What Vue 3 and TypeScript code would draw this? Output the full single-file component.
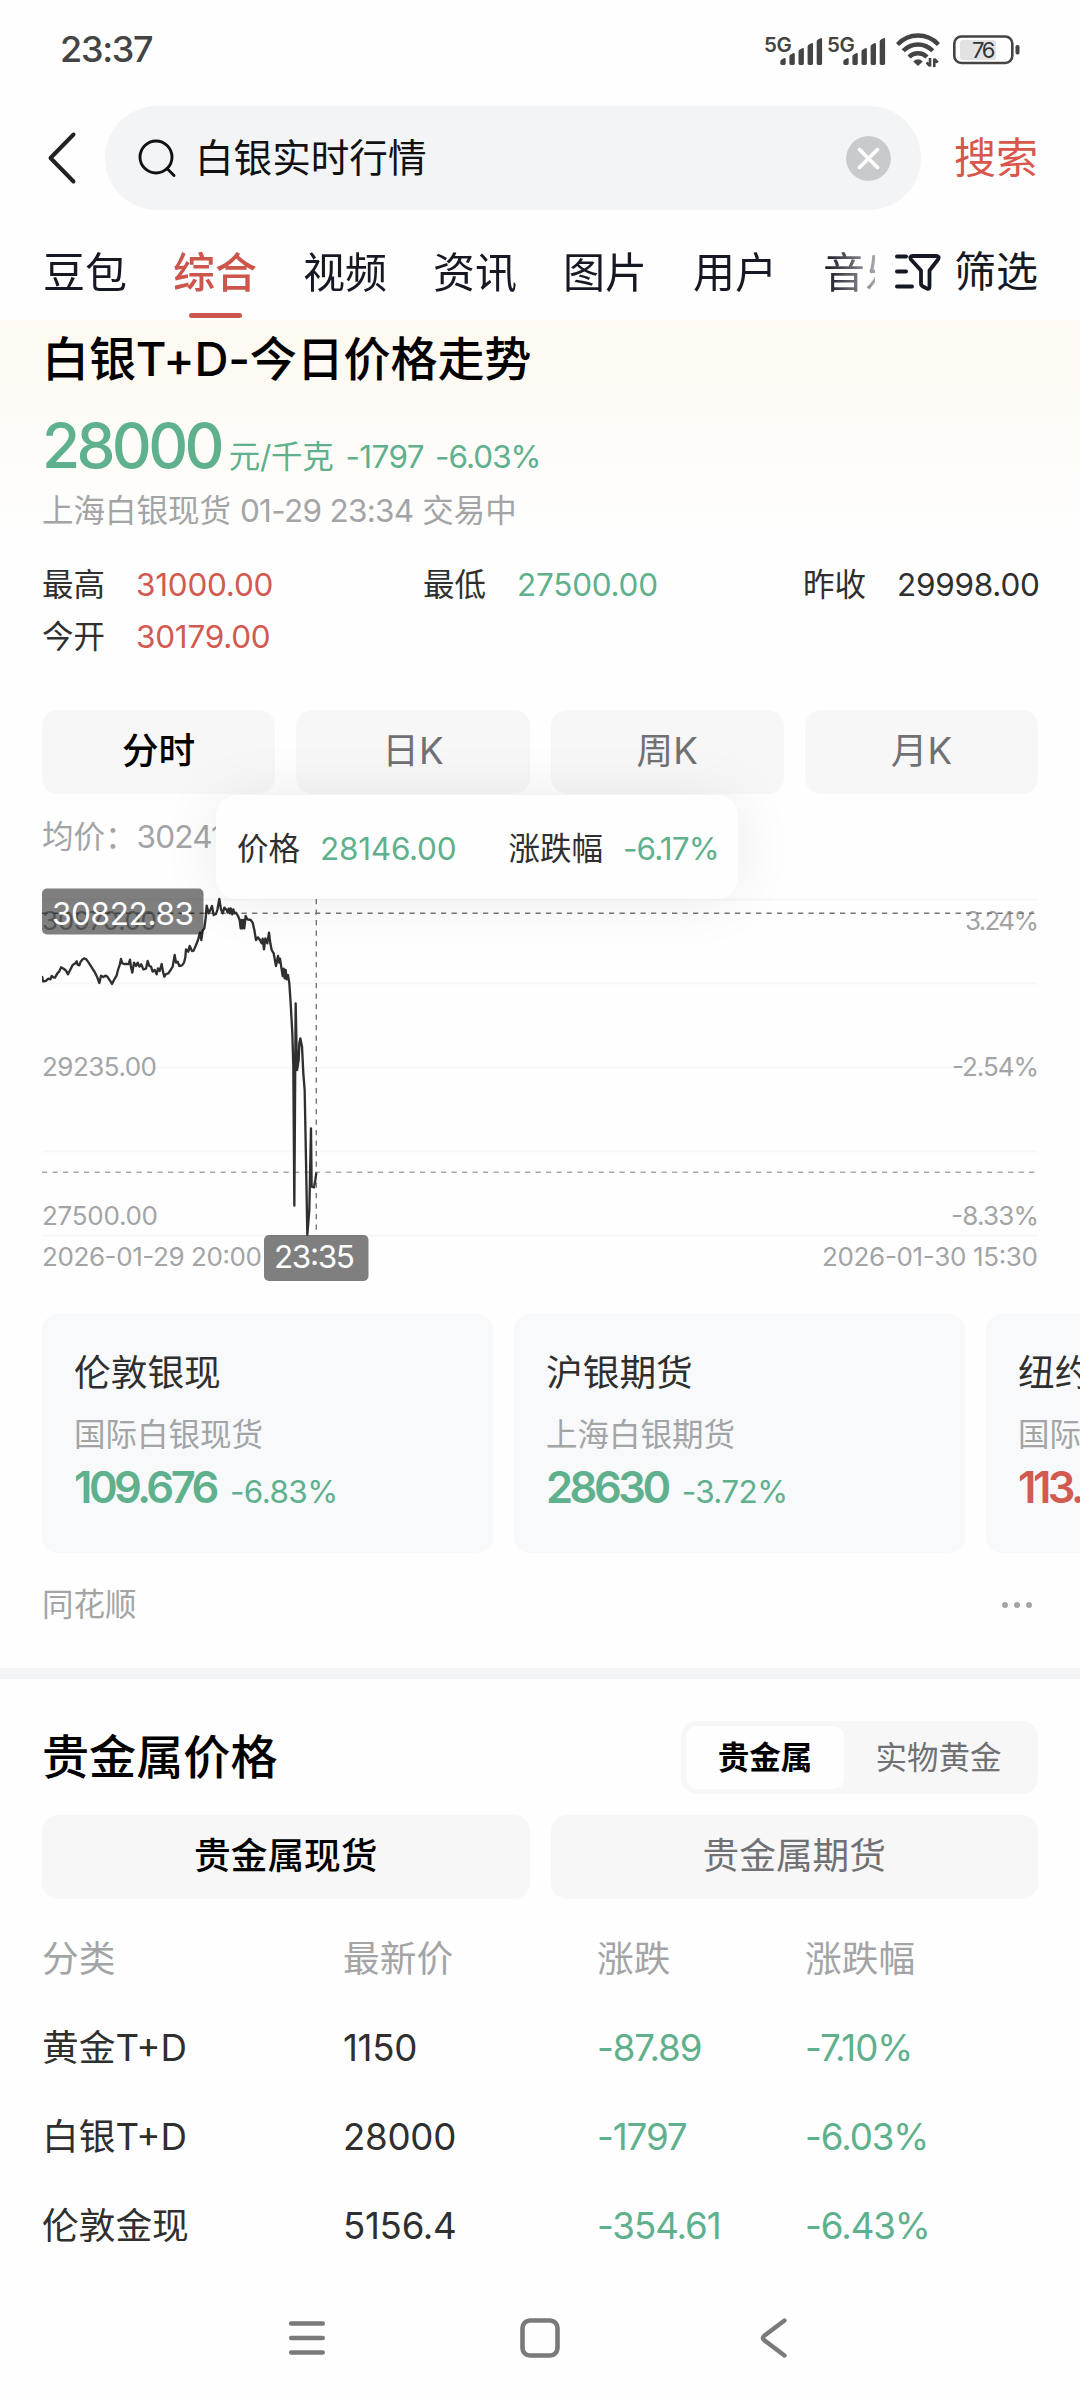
<script setup lang="ts">
interface Stat { label: string; value: string; tone: string }
interface Quote { name: string; market: string; price: string; change: string; tone: string }

const tabs = ['豆包', '综合', '视频', '资讯', '图片', '用户', '音乐']
const periods = ['分时', '日K', '周K', '月K']
const stats: Stat[] = [
  { label: '最高', value: '31000.00', tone: 'up' },
  { label: '最低', value: '27500.00', tone: 'down' },
  { label: '昨收', value: '29998.00', tone: '' },
  { label: '今开', value: '30179.00', tone: 'up' },
]
const quotes: Quote[] = [
  { name: '伦敦银现', market: '国际白银现货', price: '109.676', change: '-6.83%', tone: 'down' },
  { name: '沪银期货', market: '上海白银期货', price: '28630', change: '-3.72%', tone: 'down' },
  { name: '纽约银主', market: '国际白银期货', price: '113.290', change: '+1.02%', tone: 'up' },
]
const rows = [
  ['黄金T+D', '1150', '-87.89', '-7.10%'],
  ['白银T+D', '28000', '-1797', '-6.03%'],
  ['伦敦金现', '5156.4', '-354.61', '-6.43%'],
]
const gridLines = [899, 983, 1067, 1151, 1235]
// Price series, in thirds of a pixel from the left edge and from y = 860.
const series =
  '126,348 129,364 137,363 145,356 151,358 155,348 160,352 165,353 172,340 178,334 183,322 192,327 198,332 204,343 212,327 218,315 226,310 230,304 233,314 238,316 242,305 248,298 252,295 258,297 266,308 275,322 284,336 291,350 298,369 303,347 310,351 316,347 322,350 330,362 336,372 342,360 350,346 354,330 359,315 363,297 367,310 373,312 386,312 390,299 393,322 397,338 402,308 408,318 413,308 418,320 424,313 430,328 438,326 443,303 448,318 453,320 458,335 464,330 470,343 474,325 479,333 485,312 489,335 493,350 498,342 505,340 512,330 518,320 524,285 528,308 533,305 538,318 546,316 552,308 556,292 558,268 565,275 569,258 576,273 581,272 588,255 594,240 600,218 604,240 608,212 613,205 617,175 620,137 626,160 631,150 636,138 641,165 648,162 652,150 658,117 663,148 668,160 673,143 680,150 683,158 686,146 690,160 692,145 697,163 700,148 703,160 708,158 714,168 719,180 722,205 725,180 727,205 731,180 733,205 737,168 742,178 752,180 758,188 763,210 768,240 774,232 780,240 785,250 788,236 792,268 796,235 802,250 807,218 811,250 815,270 821,280 828,318 834,288 838,308 840,296 845,328 848,348 851,326 854,355 857,330 860,358 864,345 868,370 872,430 877,520 880,620 883,1037 887,430 891,630 896,600 898,550 901,535 906,560 910,640 914,690 918,900 922,1124 928,1050 933,805 935,980 942,982 946,960 949,938'
const barHeights = [7, 12, 17, 22, 27]
</script>

<template>
  <div class="screen">
    <header class="status">
      <span class="clock">23:37</span>
      <div class="indicators">
        <div v-for="n in 2" :key="n" class="signal">
          <span class="net">5G</span>
          <svg width="43" height="28" viewBox="0 0 43 28">
            <path v-for="(h, i) in barHeights" :key="i" fill="#444"
              :d="`M${i * 9.1 + 0.3} ${28 - h + 3.4}q0-1.2 1-1.7l2.6-1.5q1.8-.8 1.8 1.2V26.600q0 1.400-1.400 1.400h-2.600q-1.400 0-1.400-1.400z`" />
          </svg>
        </div>
        <svg class="wifi" width="44" height="34" viewBox="0 0 44 34" fill="none" stroke="#444" stroke-width="4.400">
          <path d="M1.500 11.500C13-.5 31-.5 42.500 11.500" />
          <path d="M7.200 17.800c8.500-8.500 21-8.500 29.600 0" />
          <path d="M13 24c5-5 13-5 18 0" />
          <path d="M17.200 28.500q4.800-4.500 9.600 0L22 33z" fill="#444" stroke="none" />
          <path d="M34 25v8.500M34 33l-3.500-3.500M38.300 34v-8.500M38.300 26l3.500 3.500" stroke-width="2.600" />
        </svg>
        <svg width="67" height="30" viewBox="0 0 67 30">
          <rect x="7" y="5" width="36" height="20" rx="3" fill="#e2e2e2" />
          <rect x="1.300" y="1.500" width="58" height="26.500" rx="7" fill="none" stroke="#444" stroke-width="2.600" />
          <rect x="62.500" y="10" width="4" height="9.500" rx="1.800" fill="#444" />
          <text x="19" y="23" font-size="22" textLength="23.500" fill="#333">76</text>
        </svg>
      </div>
    </header>

    <div class="searchbar">
      <svg class="back" width="30" height="54" viewBox="0 0 30 54" fill="none" stroke="#222" stroke-width="4" stroke-linecap="round" stroke-linejoin="round">
        <path d="M26.500 3.500L3.500 27L26.500 50.500" />
      </svg>
      <div class="field">
        <svg width="40" height="40" viewBox="0 0 40 40" fill="none" stroke="#111" stroke-width="2.900" stroke-linecap="round">
          <circle cx="18" cy="19" r="16" /><path d="M29 30.500l7 7" />
        </svg>
        <span class="query">白银实时行情</span>
        <svg width="45" height="45" viewBox="0 0 45 45">
          <circle cx="22.500" cy="22.500" r="22.400" fill="#c9cacc" />
          <path d="M13.500 13.500l18 18m0-18l-18 18" stroke="#fff" stroke-width="3.800" stroke-linecap="round" />
        </svg>
      </div>
      <span class="go">搜索</span>
    </div>

    <nav class="tabs">
      <div class="tablist">
        <span v-for="(t, i) in tabs" :key="t" class="tab" :class="{ active: i === 1 }">{{ t }}</span>
      </div>
      <svg width="46" height="40" viewBox="0 0 46 40" fill="none" stroke="#161823" stroke-width="4" stroke-linecap="round" stroke-linejoin="round">
        <path d="M2 4.500h9M2 19.500h9M2 34.500h15" />
        <path d="M18 4h23q4 0 2 3.500L34.500 18.500V34.500q0 3-2.500 2.200L28 34.500q-2-1-2-3V18.500L16 7.500q-2-3.500 2-3.500z" stroke-width="3.800" />
      </svg>
      <span class="filter">筛选</span>
    </nav>

    <section class="silver">
      <h1>白银T+D-今日价格走势</h1>
      <div class="headline down">
        <span class="big">28000</span>
        <span class="unit">元/千克</span>
        <span class="diff">-1797</span>
        <span class="pct">-6.03%</span>
      </div>
      <p class="meta">上海白银现货 <span>01-29 23:34</span> 交易中</p>
      <div class="stats">
        <div v-for="s in stats" :key="s.label" class="stat">
          <span>{{ s.label }}</span><span class="num" :class="s.tone">{{ s.value }}</span>
        </div>
      </div>
      <div class="buttons">
        <div v-for="(p, i) in periods" :key="p" class="button" :class="{ on: i === 0 }">{{ p }}</div>
      </div>
      <div class="chart">
        <p class="average">均价：<span>30241.00</span></p>
        <svg width="998" height="410" viewBox="42 878 998 410">
          <path v-for="y in gridLines" :key="y" :d="`M42 ${y}.500H1038`" stroke="#f7f7f8" stroke-width="2" />
          <g fill="#a3a4a6" font-size="26">
            <text x="42" y="930" textLength="115">30970.00</text>
            <text x="42" y="1076" textLength="115">29235.00</text>
            <text x="42" y="1225" textLength="116">27500.00</text>
            <text x="965" y="930" textLength="74">3.24%</text>
            <text x="952" y="1076" textLength="87">-2.54%</text>
            <text x="951" y="1225" textLength="88">-8.33%</text>
            <text x="42" y="1266" textLength="220">2026-01-29 20:00</text>
            <text x="822" y="1266" textLength="216">2026-01-30 15:30</text>
          </g>
          <path d="M42 1172.300H1038" stroke="#a8a8a8" stroke-width="1.400" stroke-dasharray="5.250 5.250" />
          <path d="M42 913.300H1038M316.300 899V1235" fill="none" stroke="#777" stroke-width="1.400" stroke-dasharray="5.250 5.250" />
          <polyline :points="series" transform="translate(0 860) scale(.33333)" fill="none" stroke="#2f2f2f" stroke-width="7" stroke-linejoin="round" />
          <g fill="#000" fill-opacity=".5">
            <rect x="42" y="888.500" width="161.500" height="46" rx="5" />
            <rect x="264" y="1235" width="104.500" height="46" rx="5" />
          </g>
          <g fill="#fff" font-size="31.500">
            <text x="52" y="925" textLength="142">30822.83</text>
            <text x="274" y="1268" textLength="81">23:35</text>
          </g>
        </svg>
        <div class="tooltip">
          <span>价格</span><span class="num down">28146.00</span>
          <span class="second">涨跌幅</span><span class="num rate down">-6.17%</span>
        </div>
      </div>
      <div class="cards">
        <article v-for="q in quotes" :key="q.name" class="card">
          <h2>{{ q.name }}</h2>
          <p>{{ q.market }}</p>
          <div class="quote" :class="q.tone"><b>{{ q.price }}</b><span>{{ q.change }}</span></div>
        </article>
      </div>
      <footer class="source">
        <span>同花顺</span>
        <svg width="34" height="8" viewBox="0 0 34 8" fill="#a3a4a6"><circle cx="5" cy="4" r="3" /><circle cx="17" cy="4" r="3" /><circle cx="29" cy="4" r="3" /></svg>
      </footer>
    </section>

    <section class="metals">
      <div class="metalhead">
        <h1>贵金属价格</h1>
        <div class="segment"><span class="on">贵金属</span><span>实物黄金</span></div>
      </div>
      <div class="buttons">
        <div class="button on">贵金属现货</div>
        <div class="button">贵金属期货</div>
      </div>
      <div class="table">
        <div class="row head"><span>分类</span><span>最新价</span><span>涨跌</span><span>涨跌幅</span></div>
        <div v-for="r in rows" :key="r[0]" class="row">
          <span v-for="(c, i) in r" :key="i" :class="{ latest: i === 1, move: i > 1, down: i > 1 }">{{ c }}</span>
        </div>
      </div>
    </section>

    <nav class="system">
      <svg width="40" height="42" viewBox="0 0 40 42" stroke="#7a7a7a" stroke-width="4.600" stroke-linecap="round"><path d="M4.200 6.500h31.500M4.200 21h31.500M4.200 35.500h31.500" /></svg>
      <svg width="40" height="42" viewBox="0 0 40 42" fill="none" stroke="#7a7a7a" stroke-width="4.600"><rect x="2.500" y="3.500" width="35" height="35" rx="7.500" /></svg>
      <svg width="40" height="42" viewBox="0 0 40 42" fill="none" stroke="#7a7a7a" stroke-width="4.400" stroke-linecap="round"><path d="M31.500 3.500L11 19Q9 21 11 23L31.500 38.500" /></svg>
    </nav>
  </div>
</template>

<style>
body { background: #fefefe; }
</style>

<style scoped>
.screen {
  width: 1080px; height: 2400px; overflow: hidden; background: #fefefe; color: #2f2f2f; line-height: 1.2;
  font-family: Inter, "Noto Sans CJK SC", sans-serif; display: flex; flex-direction: column;
}
h1, h2, p { margin: 0; font-weight: 400; }
svg { display: block; flex: none; }
.up { color: #d25a50; }
.down { color: #5fb08c; }
.num { letter-spacing: -0.25px; }

.status { height: 100px; display: flex; align-items: center; justify-content: space-between; padding: 0 60px 0 60px; }
.clock { font-size: 36px; font-weight: 500; color: #444; letter-spacing: -1.3px; }
.indicators { display: flex; align-items: center; }
.signal { display: flex; align-items: flex-end; width: 63px; height: 30px; }
.net { font-size: 20.500px; font-weight: 600; line-height: 20px; width: 16px; margin-left: -1px; letter-spacing: -0.5px; color: #444; align-self: flex-start; }
.wifi { margin: 0 13px 0 5px; }

.searchbar { margin-top: 6px; height: 104px; display: flex; align-items: center; }
.back { margin: 0 28px 0 47px; }
.field { width: 816px; height: 104px; border-radius: 52px; background: #f3f4f6; display: flex; align-items: center; padding: 0 30px 0 33px; box-sizing: border-box; }
.query { flex: 1; margin-left: 17px; font-size: 38.600px; color: #111; }
.go { margin-left: 33px; font-size: 42px; color: #d9564a; white-space: nowrap; }

.tabs { height: 110px; padding: 14px 42px 0 0; box-sizing: border-box; display: flex; align-items: center; font-size: 42px; color: #161823; }
.tablist { width: 876px; height: 96px; margin-right: 20px; padding-left: 43px; box-sizing: border-box; overflow: hidden; display: flex; gap: 46px; -webkit-mask-image: linear-gradient(90deg, #000 825px, transparent 905px); mask-image: linear-gradient(90deg, #000 825px, transparent 905px); }
.tab { position: relative; width: 84px; flex: none; line-height: 98px; white-space: nowrap; }
.tab.active { color: #cc554c; font-weight: 500; }
.tab.active::after { content: ""; position: absolute; left: 16px; top: 89px; width: 53px; height: 5px; border-radius: 3px; background: #cc554c; }
.filter { margin-left: 13px; white-space: nowrap; }

.silver { height: 1348px; padding: 0 42px; background: linear-gradient(#fdf9f0, #fefefe 220px); box-sizing: border-box; }
h1 { font-size: 47.100px; font-weight: 500; color: #000; white-space: nowrap; }
.silver h1 { line-height: 78px; height: 77px; letter-spacing: -0.2px; }
.headline { display: flex; align-items: baseline; margin-top: 17px; height: 63px; line-height: 63px; font-size: 31.500px; white-space: nowrap; }
.big { font-size: 62px; font-weight: 500; letter-spacing: -3.700px; }
.unit { margin-left: 8px; letter-spacing: -0.3px; }
.diff { margin-left: 12px; letter-spacing: -0.6px; }
.pct { margin-left: 11px; letter-spacing: -1px; }
.meta { margin-top: 13px; line-height: 41px; height: 40px; font-size: 31.500px; color: #a3a4a6; }
.meta span { letter-spacing: -0.7px; }
.stats { margin-top: 29px; display: grid; grid-template-columns: 381px 380px auto; line-height: 52px; font-size: 31.500px; }
.stat { display: flex; gap: 31px; white-space: nowrap; }
.silver .buttons { margin-top: 47px; }
.buttons { display: flex; gap: 21px; }
.button { flex: 1; height: 84px; line-height: 82px; border-radius: 16px; background: #f7f7f7; text-align: center; font-size: 36.700px; color: #707174; }
.button.on { color: #000; font-weight: 500; }

.chart { position: relative; height: 520px; }
.average { line-height: 85px; height: 84px; font-size: 31.500px; color: #a3a4a6; }
.average span { letter-spacing: -0.8px; }
.tooltip { position: absolute; left: 174px; top: 1px; width: 522px; height: 104px; line-height: 107px; box-sizing: border-box; padding-left: 21px; border-radius: 21px; background: #fefefe; box-shadow: 0 0 60px rgba(0, 0, 0, .075); display: flex; font-size: 31.500px; white-space: nowrap; }
.tooltip .num { margin-left: 20px; }
.tooltip .rate { letter-spacing: -0.8px; }
.tooltip .second { margin-left: 52px; }

.cards { display: flex; gap: 21px; margin-right: -42px; overflow: hidden; }
.card { flex: none; width: 451px; height: 239px; border-radius: 16px; background: #f8f9fb; box-sizing: border-box; padding: 32px 0 0 32px; white-space: nowrap; }
h2 { font-size: 36.700px; line-height: 53px; height: 52px; }
.card p { margin-top: 16px; line-height: 41px; height: 40px; font-size: 31.500px; color: #a3a4a6; }
.quote { display: flex; align-items: baseline; line-height: 60px; font-size: 31.500px; margin-top: 3px; }
.quote b { font-size: 43.500px; font-weight: 600; letter-spacing: -3.500px; }
.quote span { margin-left: 14px; letter-spacing: -0.6px; }
.source { height: 104px; display: flex; align-items: center; justify-content: space-between; font-size: 31.500px; color: #a3a4a6; padding-right: 4px; }

.metals { border-top: 11px solid #f3f4f6; padding: 42px 42px 0; }
.metalhead { display: flex; align-items: center; justify-content: space-between; height: 73px; margin-bottom: 21px; }
.segment { width: 357px; height: 73px; box-sizing: border-box; padding: 5px; border-radius: 16px; background: #f7f7f7; display: flex; line-height: 63px; font-size: 31.500px; color: #707174; text-align: center; }
.segment span { flex: 1; }
.segment .on { flex: none; width: 158px; background: #fefefe; border-radius: 11px; color: #000; font-weight: 600; }
.table { margin-top: 15px; font-size: 36.700px; }
.row { display: grid; grid-template-columns: 301px 254px 208px auto; height: 89px; line-height: 89px; white-space: nowrap; }
.head { color: #a3a4a6; }
.latest { letter-spacing: -0.3px; }
.move { letter-spacing: -1.1px; }

.system { margin-top: auto; height: 124px; display: flex; align-items: center; gap: 193px; justify-content: center; }
</style>
